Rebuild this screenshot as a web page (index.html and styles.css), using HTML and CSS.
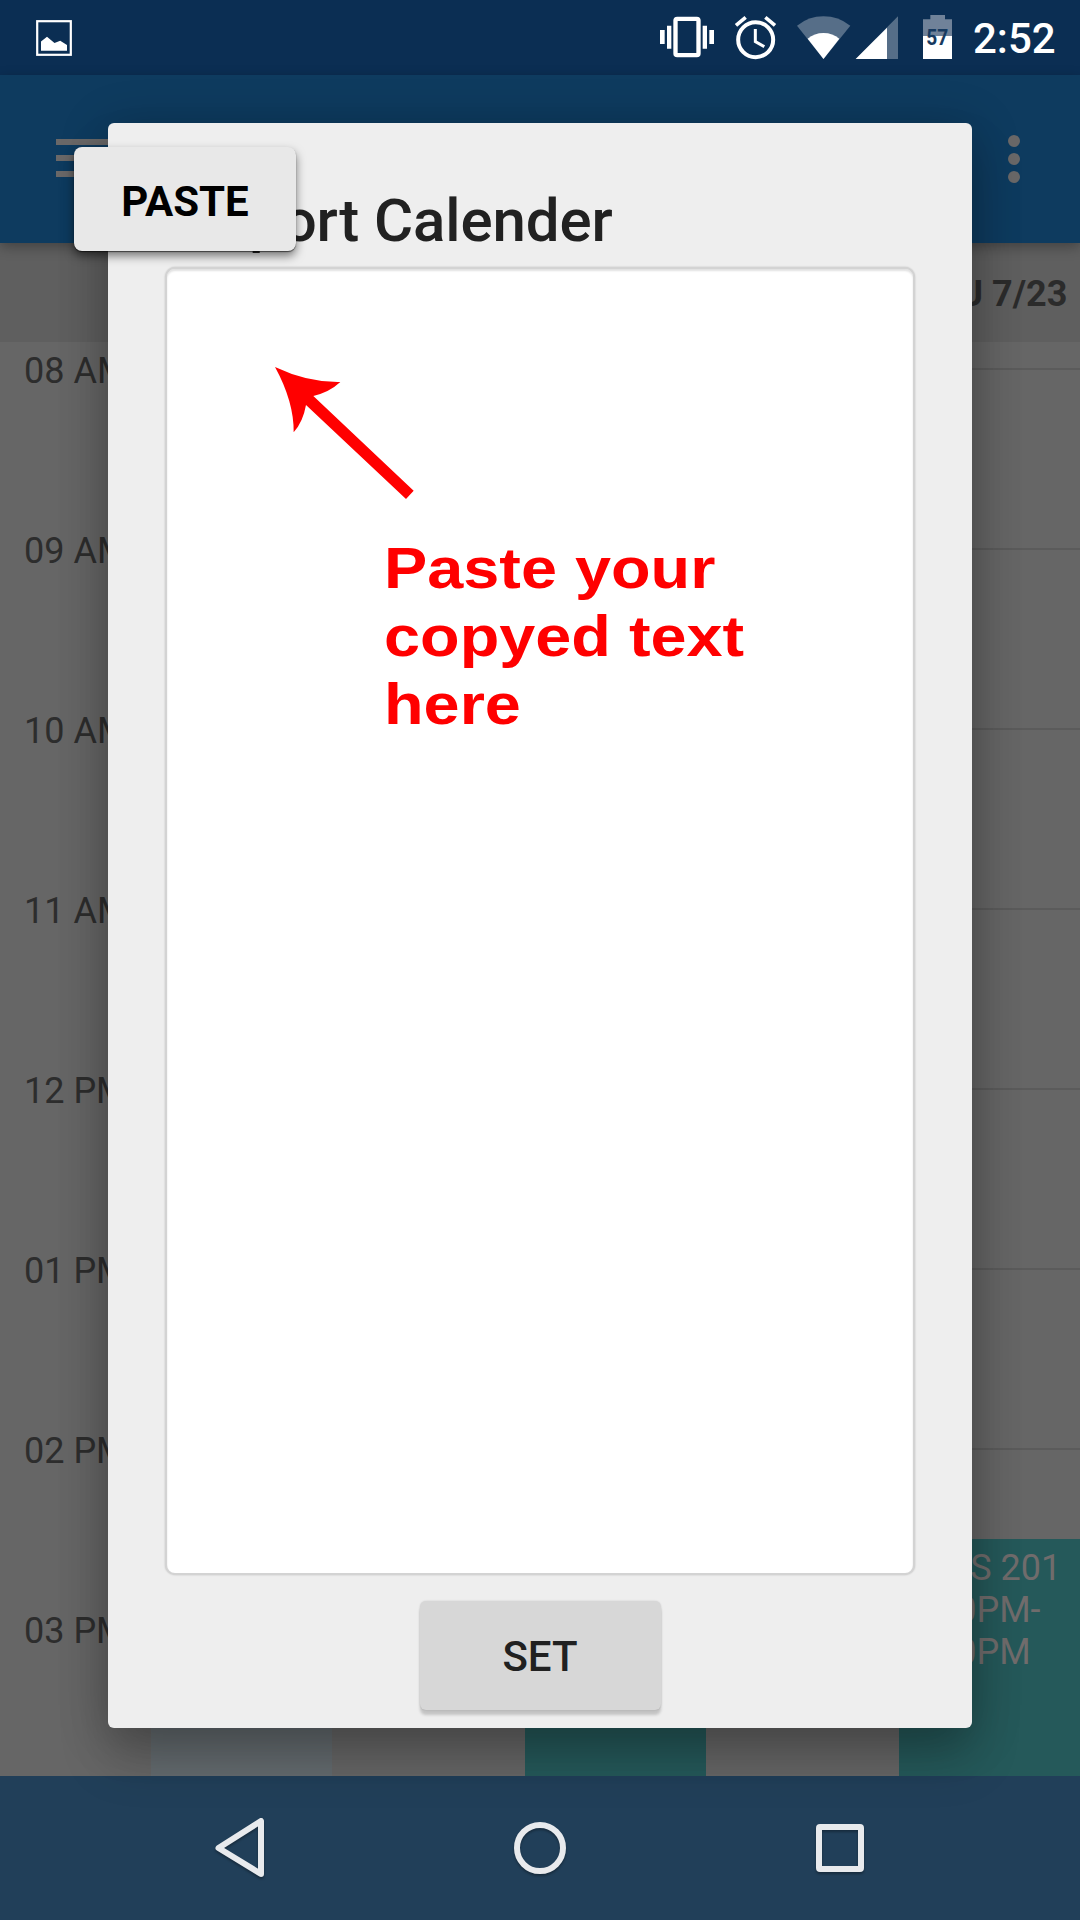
FILE: index.html
```html
<!DOCTYPE html>
<html lang="en">
<head>
<meta charset="utf-8">
<title>Import Calender</title>
<link rel="stylesheet" href="styles.css">
</head>
<body>
<div class="screen">
  <header class="status-bar">
    <svg class="icon-picture" width="36" height="36" viewBox="0 0 36 36"><rect x="1.2" y="1.2" width="33.6" height="33.6" fill="none" stroke="#fff" stroke-width="2.2"/><path d="M5 21.5l6-4.700 7.500 6.200 5.700-2.200 6.800 4.200v5.700H5z" fill="#fff"/></svg>
    <div class="status-icons">
      <svg class="icon-vibrate" width="56" height="75" viewBox="57 0 168 225"><path fill="#fff" d="M60 90h14v42H60zM81 77h13v69H81zM188 77h13v69h-13zM208 90h14v42h-14z"/><rect x="106.500" y="56.500" width="69" height="109" rx="5" fill="none" stroke="#fff" stroke-width="13"/></svg>
      <svg class="icon-alarm" width="43" height="75" viewBox="282 0 129 225" fill="none" stroke="#fff"><circle cx="347" cy="119" r="52.500" stroke-width="12"/><path stroke-width="11" d="M288 76l29-24M405 76l-29-24"/><path stroke-width="9" d="M346 87v38l27 15"/></svg>
      <svg class="icon-wifi" width="55" height="75" viewBox="468 0 165 225"><path fill="#566e88" d="M471 77Q506 49 550.500 49T631 77L550.500 177z"/><path fill="#fff" d="M503 116Q523 99 550.500 99T598 116L550.500 177z"/></svg>
      <svg class="icon-signal" width="44" height="75" viewBox="645 0 132 225"><path fill="#566e88" d="M774 49v128H647z"/><path fill="#fff" d="M741 83v94h-94z"/></svg>
      <svg class="icon-battery" width="31" height="75" viewBox="846 0 93 225"><path fill="#708299" d="M871 45h44v13h21v50h-87V58h22z"/><path fill="#fff" d="M849 108h87v69h-87z"/><text class="battery-level" x="859" y="135" textLength="66" lengthAdjust="spacingAndGlyphs">57</text></svg>
      <span class="clock">2:52</span>
    </div>
  </header>
  <div class="app-bar">
    <div class="menu-icon"><i></i><i></i><i></i></div>
    <div class="more-icon"><i></i><i></i><i></i></div>
  </div>
  <div class="day-header"><span>THU 7/23</span></div>
  <main class="calendar">
    <div class="hours">
      <div>08 AM</div><div>09 AM</div><div>10 AM</div><div>11 AM</div><div>12 PM</div><div>01 PM</div><div>02 PM</div><div>03 PM</div>
    </div>
    <div class="days">
      <div class="event pale"></div>
      <div></div>
      <div class="event teal"></div>
      <div></div>
      <div class="event teal tall">CELS 201<br>2:30PM-<br>4:00PM</div>
    </div>
  </main>
  <nav class="nav-bar">
    <svg width="60" height="70" viewBox="0 0 60 70"><path d="M8.500 35L51 8v53z" class="nav-shape"/></svg>
    <svg width="60" height="70" viewBox="0 0 60 70"><circle cx="30" cy="35" r="23" class="nav-shape"/></svg>
    <svg width="60" height="70" viewBox="0 0 60 70"><rect x="9" y="14" width="42" height="42" rx="1" class="nav-shape"/></svg>
  </nav>

  <section class="dialog">
    <h1 class="dialog-title">Import Calender</h1>
    <div class="text-area">
      <svg class="arrow" width="144" height="138" viewBox="100 75 432 414"><path fill="#f00" d="M106 81Q205 128 302 126Q270 156 221 168L522 452L499 477L199 195Q190 246 162 277Q163 185 106 81z"/></svg>
      <p class="hint">Paste your<br>copyed text<br>here</p>
    </div>
    <button class="set-button">SET</button>
  </section>
  <div class="paste-popup">PASTE</div>
</div>
</body>
</html>
```
FILE: styles.css
```css
* { box-sizing: border-box; }
body { margin: 0; font-family: Roboto, sans-serif; }
.screen {
  position: relative;
  width: 1080px;
  height: 1920px;
  overflow: hidden;
  display: flex;
  flex-direction: column;
  background: #666;
}

.status-bar {
  height: 75px;
  flex: none;
  display: flex;
  justify-content: space-between;
  align-items: center;
  padding: 0 24px 0 36px;
  background: #0b2e53;
}
.status-icons { display: flex; align-items: center; }
.icon-alarm, .icon-wifi { margin-left: 19px; }
.icon-signal { margin-left: 4px; }
.icon-battery { margin-left: 23px; }
.battery-level { font: 700 64px Roboto, sans-serif; fill: #173a60; }
.clock {
  margin-left: 20px;
  padding-top: 3px;
  width: 83px;
  font-size: 42px;
  font-weight: 500;
  line-height: 72px;
  color: #fff;
}

.app-bar {
  height: 168px;
  flex: none;
  display: flex;
  justify-content: space-between;
  align-items: center;
  padding: 0 60px 0 56px;
  background: #0e3b5f;
  box-shadow: 0 4px 12px rgba(0, 0, 0, .3);
  z-index: 1;
}
.menu-icon { display: flex; flex-direction: column; gap: 10px; margin-bottom: 2px; }
.menu-icon i { width: 72px; height: 6px; background: #6a6868; }
.more-icon { display: flex; flex-direction: column; gap: 6px; }
.more-icon i { width: 12px; height: 12px; border-radius: 50%; background: #6a6868; }

.day-header {
  height: 99px;
  flex: none;
  display: flex;
  justify-content: flex-end;
  background: #5f5f5f;
  color: #2b2b2b;
  font-size: 36px;
  font-weight: 700;
  line-height: 102px;
}
.day-header span { width: 181px; text-align: center; white-space: nowrap; }

.calendar { height: 1434px; flex: none; display: flex; }
.hours {
  width: 151px;
  padding: 8px 0 0 24px;
  color: #2d2d2d;
  font-size: 36px;
  line-height: 42px;
}
.hours div { height: 180px; }
.days {
  flex: 1;
  display: grid;
  grid-template-columns: repeat(5, 181px);
  column-gap: 6px;
  align-items: end;
  background: repeating-linear-gradient(#5b5b5b 0 2px, transparent 2px 180px) 0 26px no-repeat;
}
.event { height: 120px; }
.pale { background: #646b6f; }
.teal { background: #25595a; }
.tall {
  height: 237px;
  padding: 8px;
  color: #706c6c;
  font-size: 36px;
  line-height: 42px;
}

.nav-bar {
  height: 144px;
  flex: none;
  display: flex;
  justify-content: space-between;
  align-items: center;
  padding: 0 210px;
  background: #213f59;
}
.nav-shape {
  fill: none;
  stroke: #e8eaed;
  stroke-width: 6;
  stroke-linejoin: round;
  filter: drop-shadow(0 2px 1px rgba(0, 0, 0, .3));
}

.dialog {
  position: absolute;
  left: 108px;
  top: 123px;
  width: 864px;
  height: 1605px;
  z-index: 2;
  display: flex;
  flex-direction: column;
  align-items: center;
  padding-top: 63px;
  background: #eee;
  border-radius: 6px;
  box-shadow: 0 6px 50px rgba(0, 0, 0, .24), 0 32px 50px rgba(0, 0, 0, .18);
}
.dialog-title {
  align-self: stretch;
  height: 81px;
  margin: 0;
  padding-left: 72px;
  font-size: 60px;
  font-weight: 500;
  letter-spacing: -.1px;
  line-height: 70px;
  color: #212121;
}
.text-area {
  width: 750px;
  height: 1308px;
  flex: none;
  padding: 96px 0 0 106px;
  background: #fff;
  border: 2px solid #d3d3d3;
  border-radius: 10px;
  box-shadow: 0 0 2px rgba(0, 0, 0, .2), inset 0 2px 2px rgba(0, 0, 0, .12);
}
.arrow { display: block; }
.hint {
  margin: 31px 0 0 111px;
  color: #f00;
  font: 700 57px/68.2px "Liberation Sans", Arial, sans-serif;
  transform: scaleX(1.137);
  transform-origin: 0 0;
  white-space: nowrap;
}
.set-button {
  width: 241px;
  height: 109px;
  margin-top: 26px;
  padding: 2px 0 0;
  border: 0;
  border-radius: 6px;
  background: #d7d7d7;
  box-shadow: 0 5px 3px rgba(0, 0, 0, .18), 0 0 2px rgba(0, 0, 0, .15);
  color: #212121;
  font: 500 42px Roboto, sans-serif;
}
.paste-popup {
  position: absolute;
  left: 74px;
  top: 147px;
  width: 222px;
  height: 104px;
  z-index: 3;
  background: #e8e8e8;
  border-radius: 8px;
  box-shadow: 0 1px 1px rgba(0, 0, 0, .55), 0 5px 10px rgba(0, 0, 0, .5);
  color: #000;
  font-size: 42px;
  font-weight: 700;
  line-height: 110px;
  text-align: center;
}
```
